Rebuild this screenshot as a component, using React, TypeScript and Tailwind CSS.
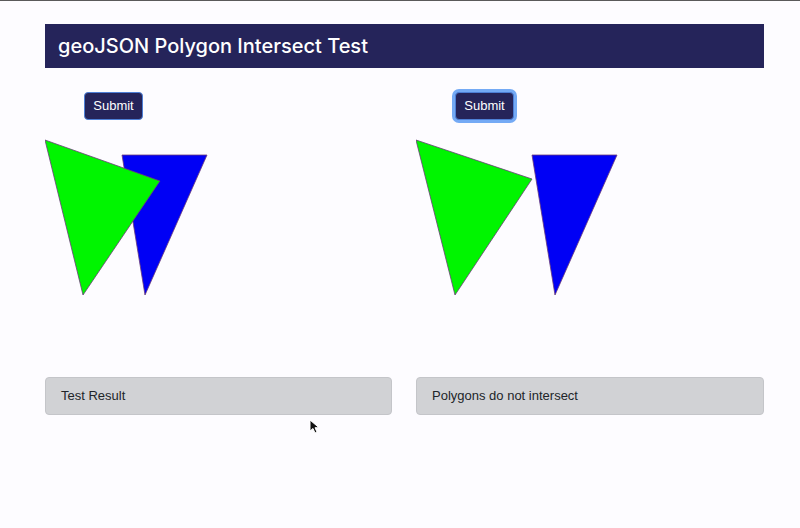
import { useState } from "react";

type Pt = [number, number];

type Panel = {
  width: string;
  green: Pt[];
  blue: Pt[];
  result: string;
  focused: boolean;
};

const panels: Panel[] = [
  {
    width: "w-[347px]",
    green: [
      [0, 10],
      [115, 51],
      [38, 165],
    ],
    blue: [
      [77, 25],
      [162, 25],
      [100, 165],
    ],
    result: "Test Result",
    focused: false,
  },
  {
    width: "w-[348px]",
    green: [
      [0, 10],
      [116, 49],
      [39, 165],
    ],
    blue: [
      [116, 25],
      [201, 25],
      [139, 165],
    ],
    result: "Polygons do not intersect",
    focused: true,
  },
];

const toPoints = (pts: Pt[]) => pts.map((p) => p.join(",")).join(" ");

function PolygonPanel({ panel }: { panel: Panel }) {
  const [clicked, setClicked] = useState(panel.focused);

  return (
    <div className={`flex flex-col ${panel.width}`}>
      <div className="pl-[39px] pt-[24px]">
        <button
          onClick={() => setClicked(true)}
          className={`
            h-[28px]
            w-[59px]
            rounded-[4px]
            bg-[#25245a]
            text-white
            text-[13px]
            border
            border-[#4d7fd6]
            ${clicked ? "ring-[3px] ring-[#74aaf5]" : ""}
          `}
        >
          Submit
        </button>
      </div>

      <svg width="347" height="247" className="mt-[10px] block">
        <polygon
          points={toPoints(panel.blue)}
          fill="#0000f5"
          stroke="#6b3b78"
          strokeWidth="0.8"
        />
        <polygon
          points={toPoints(panel.green)}
          fill="#00f500"
          stroke="#6b3b78"
          strokeWidth="0.8"
        />
      </svg>

      <div
        className="
          h-[38px]
          flex
          items-center
          px-[15px]
          bg-[#d1d2d5]
          border
          border-[#c4c5c9]
          rounded-[4px]
          text-[13px]
          text-[#212529]
        "
      >
        {panel.result}
      </div>
    </div>
  );
}

export default function App() {
  return (
    <div
      className="relative w-[800px] h-[528px] bg-[#fdfcff] border-t border-[#5a5a5a] overflow-hidden"
      style={{ fontFamily: '"Liberation Sans", Arial, sans-serif' }}
    >
      <div className="ml-[45px] w-[719px] mt-[23px]">
        <div
          className="
            h-[44px]
            flex
            items-center
            pl-[13px]
            bg-[#25245a]
            text-white
            text-[20px]
            font-medium
          "
          style={{ fontFamily: "Inter, sans-serif" }}
        >
          geoJSON Polygon Intersect Test
        </div>

        <div className="flex gap-[24px]">
          {panels.map((p, i) => (
            <PolygonPanel key={i} panel={p} />
          ))}
        </div>
      </div>

      {/* mouse cursor */}
      <svg
        width="12"
        height="16"
        viewBox="0 0 12 16"
        className="absolute left-[309px] top-[418px]"
      >
        <path
          d="M1 1 L1 12 L4 9.5 L6 14 L8 13 L6 8.7 L10 8.7 Z"
          fill="#111"
          stroke="#fff"
          strokeWidth="1"
        />
      </svg>
    </div>
  );
}
